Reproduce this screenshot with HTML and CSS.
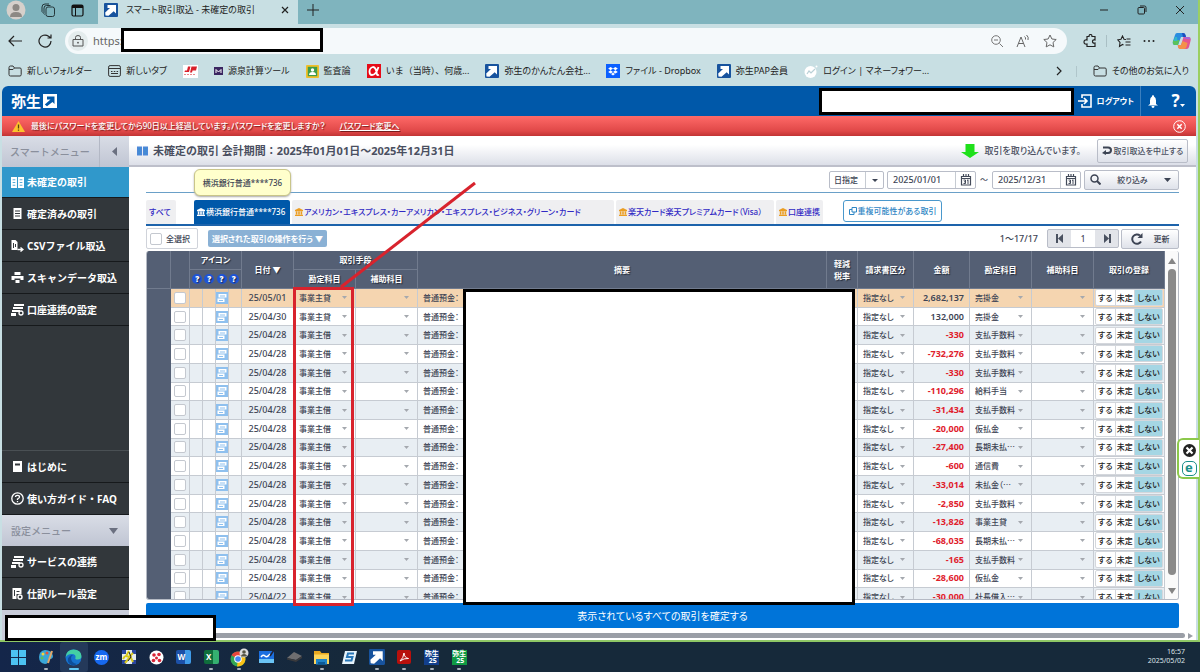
FILE: index.html
```html
<!DOCTYPE html>
<html lang="ja">
<head>
  <meta charset="UTF-8" />
  <meta name="viewport" content="width=device-width, initial-scale=1" />
  <title>スマート取引取込 - 未確定の取引</title>
  <link rel="stylesheet" href="styles.css">
</head>
<body>

  <svg class="sprite" aria-hidden="true">
    <symbol id="yayoi" viewBox="0 0 14 14"><rect width="14" height="14" rx="1" fill="#17539e"/><path d="M3.500 2H12v8.500L9.700 8.200 4.500 12.800 1.500 12.500 1.200 9.500 6 5H3.500z" fill="#fff"/></symbol>
    <symbol id="folder" viewBox="0 0 14 12"><path d="M1 9.500V2.500Q1 1 2.500 1H5l1.500 2H12q1.200 0 1.200 1.200V9.500Q13.200 11 12 11H2.500Q1 11 1 9.500zM1 4.500h4l1.500-1.500" fill="none" stroke="#333" stroke-width="1"/></symbol>
    <symbol id="bank" viewBox="0 0 10 10"><path d="M5 0l5 2.500V4H0V2.500zM1 4.500h2V8H1zM4 4.500h2V8H4zM7 4.500h2V8H7zM0 8.500h10V10H0z" fill="currentColor"/></symbol>
    <symbol id="book" viewBox="0 0 12 10"><path d="M0 0h5.500v10H0zM6.500 0H12v10H6.500z" fill="currentColor"/><path d="M1.500 2.500h2.500M1.500 5h2.500M1.500 7.500h2.500M8 2.500h2.500M8 5h2.500M8 7.500h2.500" stroke="#3098cb" opacity=".8"/></symbol>
    <symbol id="cal" viewBox="0 0 12 12"><path d="M1.500 2.500h9v8.500h-9zM1.500 4.500h9M3.500 0v3M6 0v3M8.500 0v3" fill="none" stroke="#444b5a" stroke-width="1.200"/><path d="M3.500 6h2v3.500H3.500M4 7.800h1.500M8 5.500V10M7 6.300h1" fill="none" stroke="#444b5a"/></symbol>
    <symbol id="link" viewBox="0 0 13 12"><path d="M3 0h10v2H3zM2 3h10v2H2zM1 6h8v2H1zM0 9h5v3H0z" fill="currentColor"/><circle cx="10" cy="9" r="2" fill="none" stroke="currentColor" stroke-width="1.300"/></symbol>
  </svg>

  <div class="window">
    <div class="title-bar">
      <div class="title-icons">
        <svg width="20" height="20" viewBox="0 0 20 20"><circle cx="10" cy="10" r="9.500" fill="#d6d0cb"/><circle cx="10" cy="7.500" r="3.500" fill="#8d8984"/><path d="M4 17q0-5 6-5t6 5z" fill="#8d8984"/></svg>
        <svg width="15" height="15" viewBox="0 0 15 15" fill="none" stroke="#24363a"><rect x="5" y="4" width="8.500" height="9.500" rx="2"/><path d="M3.500 11.500Q2.500 11 3 9V5q0-2.500 2.500-2.500h4M1.500 9.500Q.8 9 1 7V4Q1 1 4 1h4"/></svg>
        <svg width="13" height="13" viewBox="0 0 13 13"><rect x="1" y="1" width="11" height="11" rx="1.500" fill="none" stroke="#111" stroke-width="1.200"/><path d="M1 1h11v3H1z" fill="#111"/><path d="M4.500 4v8" stroke="#111"/></svg>
      </div>
      <div class="browser-tab">
        <svg width="14" height="14"><use href="#yayoi"/></svg>
        <span>スマート取引取込 - 未確定の取引</span>
        <button class="plain" aria-label="タブを閉じる"><svg width="8" height="8" viewBox="0 0 8 8"><path d="M1 1l6 6M7 1L1 7" stroke="#222" stroke-width="1.200"/></svg></button>
      </div>
      <button class="plain new-tab" aria-label="新しいタブ"><svg width="12" height="12" viewBox="0 0 12 12"><path d="M6 0v12M0 6h12" stroke="#222"/></svg></button>
      <div class="window-buttons">
        <button class="plain" aria-label="最小化"><svg width="10" height="10" viewBox="0 0 10 10"><path d="M1 5h8" stroke="#222"/></svg></button>
        <button class="plain" aria-label="元に戻す"><svg width="10" height="10" viewBox="0 0 10 10" fill="none" stroke="#222"><rect x="1" y="2.500" width="6.500" height="6.500" rx="1"/><path d="M3 1h4.500Q9 1 9 2.500V7"/></svg></button>
        <button class="plain" aria-label="閉じる"><svg width="10" height="10" viewBox="0 0 10 10"><path d="M1 1l8 8M9 1L1 9" stroke="#222"/></svg></button>
      </div>
    </div>

    <div class="address-row">
      <button class="plain" aria-label="戻る"><svg width="14" height="12" viewBox="0 0 14 12"><path d="M6 1L1 6l5 5M1 6h13" fill="none" stroke="#222" stroke-width="1.200"/></svg></button>
      <button class="plain reload" aria-label="更新"><svg width="14" height="14" viewBox="0 0 14 14"><path d="M13 7A6 6 0 1 1 10.500 2.200L13 4M13 .5V4H9.500" fill="none" stroke="#222" stroke-width="1.200"/></svg></button>
      <div class="address">
        <svg class="lock" width="20" height="20" viewBox="0 0 20 20"><circle cx="10" cy="10" r="10" fill="#e4eced"/><path d="M5 8.500h10V15H5zM7.500 8.500V6.500Q7.500 4.500 10 4.500t2.500 2v2" fill="none" stroke="#555"/><circle cx="10" cy="11.700" r=".9" fill="#555"/></svg>
        <input type="text" value="https:" aria-label="アドレス">
        <svg width="12" height="12" viewBox="0 0 12 12"><path d="M8.500 8.500L12 12M3 5h4" stroke="#777"/><circle cx="5" cy="5" r="4.300" fill="none" stroke="#777"/></svg>
        <svg width="14" height="13" viewBox="0 0 14 13"><path d="M1 12L5 2l4 10M2.500 8.500h5M8.500 1.500q1.500 1 1 3M10.500 0q2.500 2 1.500 5" fill="none" stroke="#666"/></svg>
        <svg width="14" height="14" viewBox="0 0 14 14"><path d="M7 1l1.900 4 4.300.5L10 8.500l.8 4.400L7 10.800l-3.800 2.100L4 8.500.8 5.500 5.100 5z" fill="none" stroke="#666"/></svg>
      </div>
      <div class="address-tools">
        <svg width="13" height="14" viewBox="0 0 13 14"><path d="M4 2.500h2q0-2 1.500-2t1.500 2h3v3.500q-2.500-.5-2.500 1.500t2.500 1.500v3.500H4V10Q1 10.500 1 8t3-2z" fill="none" stroke="#222" stroke-width="1.200"/></svg>
        <i></i>
        <svg width="14" height="13" viewBox="0 0 14 13"><path d="M9 4.500l-2-.3L5.500 1 4 4.200.8 4.800 3 7.500l-.5 4L5.500 9.500l1 .5M9.500 4h4M8.500 7h5M8.500 10h5" fill="none" stroke="#222" stroke-width="1.100"/></svg>
        <svg width="12" height="4" viewBox="0 0 12 4" fill="#222"><circle cx="1.500" cy="2" r="1"/><circle cx="6" cy="2" r="1"/><circle cx="10.500" cy="2" r="1"/></svg>
        <svg width="19" height="18" viewBox="0 0 19 18"><path d="M5 1h6q2 0 2.500 2l.5 2H9L6 13H3Q0 13 1 9l2-6q.5-2 2-2z" fill="#2a8de0"/><path d="M1 9q-.8 4 2 4h3l1.500-5H1.300z" fill="#5cc25a"/><path d="M5 5H3L1.500 9h4z" fill="#35b8c8"/><path d="M14 5h2.500q3 0 2 4l-1.500 6q-.5 2-2.500 2H8.500q-2 0-2.500-2l-.3-2H9l2.500-8z" fill="#e4558f"/><path d="M6 13h3l1.500-4 5 2-1 4q-.5 2-2.500 2H8.500Q6.500 17 6 15z" fill="#f4914a"/><path d="M11 1q2 0 2.500 2l.5 2h-3L10 1z" fill="#1c4fc0"/><path d="M14 5h2.500q2 0 2 2.500L11 6.500z" fill="#a866d8"/></svg>
      </div>
    </div>

    <nav class="bookmarks">
      <a href="#"><svg width="14" height="12"><use href="#folder"/></svg>新しいフォルダー</a>
      <a href="#"><svg width="13" height="12" viewBox="0 0 13 12"><rect x=".6" y=".6" width="11.800" height="10.800" rx="1.500" fill="none" stroke="#333"/><path d="M1 3.500h11M3 6.500h1.500M5.800 6.500h1.500M8.600 6.500h1.500M3 8.500h7" stroke="#333"/></svg>新しいタブ</a>
      <a href="#" aria-label="日本郵便"><svg width="15" height="13" viewBox="0 0 15 13"><rect width="15" height="13" fill="#fff"/><path d="M5 1.500h2.500L6 7H1.500L2 5.500h2zM8.500 1.500H14L13 5.500H9.500L9 7.500H7z" fill="#d8202a"/><path d="M1 9.500h12" stroke="#e8888c" stroke-width="1.200" stroke-dasharray="2 1"/></svg></a>
      <a href="#"><svg width="9" height="8" viewBox="0 0 9 8"><rect width="9" height="8" fill="#3a2560"/><path d="M2 6V2.500L4.500 5 7 2.500V6" fill="none" stroke="#fff"/></svg>源泉計算ツール</a>
      <a href="#"><svg width="13" height="13" viewBox="0 0 13 13"><rect width="13" height="13" rx="1" fill="#efbf2a"/><rect x="1.800" y="1.800" width="9.400" height="9.400" fill="#3f9b4a"/><circle cx="6.500" cy="5" r="1.700" fill="#fff"/><path d="M3 10q0-3 3.500-3t3.500 3z" fill="#fff"/></svg>監査論</a>
      <a href="#" class="wide"><svg width="14" height="14" viewBox="0 0 14 14"><rect width="14" height="14" fill="#e60b18"/><path d="M11.500 3Q9 11 5 11 2.500 11 2.500 7.500T6 3q3 0 4 7.500.5 1 2 .3" fill="none" stroke="#fff" stroke-width="1.800"/></svg>いま（当時）、何歳...</a>
      <a href="#"><svg width="14" height="14"><use href="#yayoi"/></svg>弥生のかんたん会社...</a>
      <a href="#"><svg width="14" height="14" viewBox="0 0 14 14"><rect width="14" height="14" fill="#0b5fff"/><path d="M4.600 3L7 4.600 4.600 6.200 2.200 4.600zM9.400 3l2.400 1.600-2.400 1.600L7 4.600zM4.600 6.300L7 7.900 4.600 9.500 2.200 7.900zM9.400 6.300l2.400 1.600-2.400 1.600L7 7.900zM7 8.700l2 1.400-2 1.400-2-1.400z" fill="#fff"/></svg>ファイル - Dropbox</a>
      <a href="#"><svg width="14" height="14"><use href="#yayoi"/></svg>弥生PAP会員</a>
      <a href="#"><svg width="14" height="13" viewBox="0 0 14 13"><circle cx="6.500" cy="7" r="6" fill="#fff"/><circle cx="12.500" cy="1.500" r="1" fill="#fff"/><path d="M3 9l2-3 2 2 4-4" fill="none" stroke="#b9d0d6" stroke-width="1.200"/></svg>ログイン | マネーフォワー...</a>
      <span class="bookmark-more"><svg width="6" height="10" viewBox="0 0 6 10"><path d="M1 1l4 4-4 4" fill="none" stroke="#222" stroke-width="1.200"/></svg></span>
      <a href="#"><svg width="14" height="12"><use href="#folder"/></svg>その他のお気に入り</a>
    </nav>

    <div class="page">
      <header class="app-header">
        <div class="logo">弥生<svg width="14" height="14" viewBox="0 0 14 14"><path d="M0 0h14v14H0z" fill="#fff"/><path d="M4 2.500h7.500V10L9.500 8 4 12.300 1.800 10.500 7.500 5.500H4z" fill="#0058a9"/></svg></div>
        <a href="#" class="logout"><svg width="14" height="14" viewBox="0 0 14 14"><path d="M4 4V1h9v12H4v-3M0 7h8M6 4l3 3-3 3" fill="none" stroke="#fff" stroke-width="1.600"/></svg>ログアウト</a>
        <button class="plain bell" aria-label="お知らせ"><svg width="10" height="13" viewBox="0 0 10 13"><path d="M5 0q1 0 1 1.500 2 1 2 4V9l2 1.500H0L2 9V5.500q0-3 2-4Q4 0 5 0zM3.500 11h3q0 2-1.500 2t-1.500-2z" fill="#fff"/></svg></button>
        <button class="plain help" aria-label="ヘルプ">?<svg width="5" height="3" viewBox="0 0 5 3"><path d="M0 0h5L2.500 3z" fill="#fff"/></svg></button>
      </header>

      <div class="alert">
        <svg width="13" height="11" viewBox="0 0 13 11"><path d="M6.500 0L13 11H0z" fill="#fdc22d"/><path d="M6.500 3.500v4M6.500 8.500v1.200" stroke="#5a4510" stroke-width="1.300"/></svg>
        <span>最後にパスワードを変更してから90日以上経過しています。パスワードを変更しますか？</span>
        <a href="#">パスワード変更へ</a>
        <button class="plain" aria-label="閉じる"><svg width="13" height="13" viewBox="0 0 13 13" fill="none" stroke="#fff"><circle cx="6.500" cy="6.500" r="5.800"/><path d="M4.300 4.300l4.400 4.400M8.700 4.300L4.300 8.700" stroke-width="1.500"/></svg></button>
      </div>

      <div class="columns">
        <aside class="sidebar">
          <div class="menu-head">スマートメニュー<button class="plain" aria-label="メニューを閉じる"><svg width="5" height="9" viewBox="0 0 5 9"><path d="M5 0v9L0 4.500z" fill="#6b7080"/></svg></button></div>
          <a href="#" class="current"><svg width="12" height="11"><use href="#book"/></svg>未確定の取引</a>
          <a href="#"><svg width="12" height="11" viewBox="0 0 12 11"><path d="M2 0h8v11H2z" fill="#fff"/><path d="M3.500 3h5M3.500 5.500h5M3.500 8h5" stroke="#32373b"/></svg>確定済みの取引</a>
          <a href="#"><svg width="12" height="12" viewBox="0 0 12 12"><path d="M0 0h4l2 2v8H0z" fill="#fff"/><path d="M2 3v5M4 4v3" stroke="#32373b"/><path d="M6 9.500h5M9 7.500l2.500 2-2.500 2" fill="none" stroke="#fff" stroke-width="1.400"/></svg>CSVファイル取込</a>
          <a href="#"><svg width="12" height="11" viewBox="0 0 12 11"><path d="M3 0h6v3H3zM0 4h12v4H9V6.500H3V8H0zM4 8h4v3H4z" fill="#fff"/></svg>スキャンデータ取込</a>
          <a href="#"><svg width="13" height="12"><use href="#link"/></svg>口座連携の設定</a>
          <div class="spacer"></div>
          <a href="#"><svg width="12" height="11" viewBox="0 0 12 11"><path d="M1.500 0h9v11h-9z" fill="#fff"/><path d="M3.500 2.500h5v2h-5z" fill="#32373b"/></svg>はじめに</a>
          <a href="#"><svg width="13" height="13" viewBox="0 0 13 13" fill="none" stroke="#fff"><circle cx="6.500" cy="6.500" r="5.700" stroke-width="1.300"/><path d="M4.500 5Q4.500 3.300 6.500 3.300T8.500 5Q8.500 6 6.500 7v1M6.500 9v1.200" stroke-width="1.300"/></svg>使い方ガイド・FAQ</a>
          <div class="menu-head settings">設定メニュー<svg width="9" height="6" viewBox="0 0 9 6"><path d="M0 0h9L4.500 6z" fill="#6b7080"/></svg></div>
          <a href="#"><svg width="13" height="12"><use href="#link"/></svg>サービスの連携</a>
          <a href="#"><svg width="12" height="12" viewBox="0 0 12 12"><path d="M1 0h9v6H5v5H1z" fill="#fff"/><path d="M3 2v6M5 3.500h3" stroke="#32373b"/><circle cx="8.500" cy="9" r="2" fill="none" stroke="#fff" stroke-width="1.400"/></svg>仕訳ルール設定</a>
          <div class="menu-foot"></div>
        </aside>

        <main>
          <div class="page-head">
            <svg width="11" height="10"><use href="#book"/></svg>
            <h1>未確定の取引 会計期間：2025年01月01日～2025年12月31日</h1>
            <svg class="arrow-down" width="18" height="14" viewBox="0 0 18 14"><path d="M4.500 0h9v8H18l-9 6-9-6h4.500z" fill="#1fe01a"/></svg>
            <span>取引を取り込んでいます。</span>
            <button class="btn stop"><svg width="10" height="9" viewBox="0 0 10 9"><path d="M1 1.500h5q3 0 3 2.700T6 7H3" fill="none" stroke="#3d4454" stroke-width="2"/><path d="M4 4v5L0 7z" fill="#3d4454"/></svg>取引取込を中止する</button>
          </div>

          <div class="content">
            <div class="filters">
              <select aria-label="期間" class="period"><option>日指定</option></select>
              <div class="date-box"><input type="text" value="2025/01/01" aria-label="開始日"><button class="plain" aria-label="カレンダー"><svg width="12" height="12"><use href="#cal"/></svg></button></div>
              <span>～</span>
              <div class="date-box"><input type="text" value="2025/12/31" aria-label="終了日"><button class="plain" aria-label="カレンダー"><svg width="12" height="12"><use href="#cal"/></svg></button></div>
              <button class="btn narrow"><svg width="11" height="11" viewBox="0 0 11 11" fill="none" stroke="#3d4454"><circle cx="4.500" cy="4.500" r="3.500" stroke-width="1.500"/><path d="M7 7l3.500 3.500" stroke-width="2"/></svg>絞り込み<svg width="7" height="4" viewBox="0 0 7 4"><path d="M0 0h7L3.500 4z" fill="#3d4454"/></svg></button>
              <div class="tip">横浜銀行普通****736</div>
            </div>

            <div class="tabs">
              <a href="#" class="all">すべて</a>
              <a href="#" class="active"><svg width="8" height="8"><use href="#bank"/></svg>横浜銀行普通****736</a>
              <a href="#" class="card"><svg width="8" height="8"><use href="#bank"/></svg>アメリカン・エキスプレス・カーアメリカン・エキスプレス・ビジネス・グリーン・カード</a>
              <a href="#" class="visa"><svg width="8" height="8"><use href="#bank"/></svg>楽天カード楽天プレミアムカード（Visa）</a>
              <a href="#" class="account"><svg width="8" height="8"><use href="#bank"/></svg>口座連携</a>
              <button class="duplicate"><svg width="8" height="8" viewBox="0 0 8 8" fill="none" stroke="#2f86c4"><path d="M3 .5h4.500V5H3zM3 2.500H.5v5h4.500V5"/></svg>重複可能性がある取引</button>
            </div>

            <div class="tools">
              <label class="select-all"><input type="checkbox">全選択</label>
              <button class="bulk">選択された取引の操作を行う ▼</button>
              <span class="count">1～17/17</span>
              <div class="pager">
                <button class="plain" aria-label="前へ"><svg width="8" height="9" viewBox="0 0 8 9"><path d="M0 0h2v9H0zM7 0v9L2 4.500z" fill="#4a5160"/></svg></button>
                <input type="text" value="1" aria-label="ページ">
                <button class="plain" aria-label="次へ"><svg width="8" height="9" viewBox="0 0 8 9"><path d="M6 0h2v9H6zM1 0v9l5-4.500z" fill="#4a5160"/></svg></button>
              </div>
              <button class="btn refresh"><svg width="12" height="12" viewBox="0 0 12 12"><path d="M10 8.500A4.700 4.700 0 1 1 9 2.500" fill="none" stroke="#3d4454" stroke-width="2"/><path d="M11.500 0v5h-5z" fill="#3d4454"/></svg>更新</button>
            </div>

            <div class="grid">
              <div class="grid-view">
                <table>
                  <colgroup>
                    <col class="c-edge"><col class="c-check"><col class="c-icon"><col class="c-icon"><col class="c-icon"><col class="c-icon">
                    <col class="c-date"><col class="c-sel"><col class="c-sel"><col><col class="c-tax"><col class="c-kind">
                    <col class="c-kind"><col class="c-sel"><col class="c-sel"><col class="c-reg">
                  </colgroup>
                  <thead>
                    <tr>
                      <th rowspan="2"></th><th rowspan="2"></th><th colspan="4">アイコン</th><th rowspan="2">日付 ▼</th><th colspan="2">取引手段</th>
                      <th rowspan="2">摘要</th><th rowspan="2">軽減<br>税率</th><th rowspan="2">請求書区分</th><th rowspan="2">金額</th>
                      <th rowspan="2">勘定科目</th><th rowspan="2">補助科目</th><th rowspan="2">取引の登録</th>
                    </tr>
                    <tr>
                      <th colspan="4"><div class="hints"><b>?</b><b>?</b><b>?</b><b>?</b></div></th><th>勘定科目</th><th>補助科目</th>
                    </tr>
                  </thead>
                  <tbody id="rows"></tbody>
                </table>
              </div>
              <div class="v-scroll"><i class="up"></i><i class="thumb"></i><i class="down"></i></div>
            </div>

            <button class="confirm">表示されているすべての取引を確定する</button>
          </div>
          <div class="h-scroll"><i class="thumb"></i><i class="right"></i></div>
        </main>
      </div>
    </div>

    <!-- 目隠しと注釈 -->
    <div class="mask mask-url"></div>
    <div class="mask mask-user"></div>
    <div class="mask mask-summary"></div>
    <div class="mask mask-status"></div>
    <svg class="note" width="186" height="428" viewBox="0 0 186 428" fill="none" stroke="#d8232d"><rect x="3.500" y="107.500" width="58" height="316" stroke-width="3"/><path d="M50 106L184 2" stroke-width="3"/></svg>

    <div class="side-widget">
      <svg width="13" height="13" viewBox="0 0 13 13"><circle cx="6.500" cy="6.500" r="6.500" fill="#222"/><path d="M3.500 3.500l6 6M9.500 3.500l-6 6" stroke="#fff" stroke-width="2.200"/></svg>
      <span>e</span>
    </div>
  </div>

  <footer class="taskbar">
    <div class="apps">
      <div><svg width="15" height="15" viewBox="0 0 15 15" fill="#4cc2f1"><path d="M0 0h7v7H0zM8 0h7v7H8zM0 8h7v7H0zM8 8h7v7H8z"/></svg></div>
      <div class="run"><svg width="16" height="16" viewBox="0 0 16 16"><path d="M7 1q7 0 8 6 0 3-3 3-2 0-2 2 0 3-3 3Q1 14 1 8q0-6 6-7z" fill="#3aa6d8"/><circle cx="5" cy="5" r="1.500" fill="#f4d23c"/><circle cx="9" cy="4" r="1.500" fill="#e8503c"/><circle cx="4" cy="9" r="1.500" fill="#58c060"/><path d="M14 2l-4 12" stroke="#e3a868" stroke-width="2"/></svg></div>
      <div class="run active"><svg width="17" height="17" viewBox="0 0 17 17"><circle cx="8.500" cy="8.500" r="8" fill="#1773cf"/><path d="M.8 7Q2 .5 8.500.5q7.500 0 8 6.500 0 3.500-4 3.500-3 0-2-2Q11 5 7 5 2.500 5 .8 8z" fill="#43cfa4"/><path d="M6 9q0 5 6 6-2 1.500-5 1.300Q2 14 3 9.500 5 5.500 8 6 6 7 6 9z" fill="#0d4f9c"/></svg></div>
      <div><span class="app zoom">zm</span></div>
      <div><svg width="14" height="14" viewBox="0 0 14 14"><path d="M0 0h14v14H0z" fill="#e6edf0"/><path d="M0 0h4v4H0zM10 0h4v4h-4zM0 10h4v4H0zM10 10h4v4h-4z" fill="#2945a0"/><path d="M7 1L4 6l4 1-5 6M11 3L8 6l3 6M3 6l-2 3" stroke="#d9c91c" stroke-width="2" fill="none"/><path d="M7 2l2 5-3 4" stroke="#222" fill="none"/></svg></div>
      <div><svg width="15" height="15" viewBox="0 0 15 15"><circle cx="7.500" cy="7.500" r="7" fill="#fff"/><g fill="#d92638"><circle cx="5" cy="5" r="1.800"/><circle cx="10" cy="4.500" r="1.800"/><circle cx="7.500" cy="8" r="1.500"/><circle cx="4.500" cy="10.500" r="1.800"/><circle cx="10.500" cy="10.500" r="1.800"/></g></svg></div>
      <div><span class="app word">W</span></div>
      <div class="run"><span class="app excel">X</span></div>
      <div class="run"><svg width="19" height="19" viewBox="0 0 19 19"><circle cx="8" cy="11" r="7.500" fill="#33a653"/><path d="M8 11L1.500 7.200Q4 3.500 8 3.500q5 0 7 4.500H8z" fill="#e8453c"/><path d="M8 11l7-3q1.500 6-2.500 9Q10 18.700 7 18.400z" fill="#fbc116"/><circle cx="8" cy="11" r="3.800" fill="#fff"/><circle cx="8" cy="11" r="2.800" fill="#4285f4"/><circle cx="14" cy="5" r="4.500" fill="#ddd"/><circle cx="14" cy="4" r="1.800" fill="#554"/><path d="M11 8.500q0-2.500 3-2.500t3 2.500z" fill="#554"/></svg></div>
      <div><svg width="16" height="14" viewBox="0 0 16 14"><path d="M0 1h15v12H0z" fill="#1b6fe0"/><path d="M0 9h15v4H0z" fill="#6bc4f5"/><path d="M2 7q2-3 4-1t5-2" stroke="#fff" stroke-width="1.500" fill="none"/><path d="M15 0l-4 6" stroke="#223" stroke-width="1.500"/></svg></div>
      <div><svg width="15" height="12" viewBox="0 0 15 12"><path d="M7 1l8 4-6 4-9-2z" fill="#6e6e70"/><path d="M0 7l9 2v2L0 8.500zM9 9l6-4v2l-6 4z" fill="#3a3a3c"/></svg></div>
      <div class="run"><svg width="17" height="15" viewBox="0 0 17 15"><path d="M1 1h6l1.500 2H16v11H1z" fill="#e8a820"/><path d="M1 4.500h15V14H1z" fill="#fcd55c"/><path d="M3 9h11v5.500H3z" fill="#1f84c8"/><path d="M5 12h7v2.500H5z" fill="#0c5a98"/></svg></div>
      <div><svg width="15" height="13" viewBox="0 0 15 13"><path d="M3 0h12l-3 13H0z" fill="#e6f3fb"/><path d="M12 2.500H6L5 6h5.500L9.500 9.500H3" fill="none" stroke="#2877b8" stroke-width="2"/></svg></div>
      <div class="run"><svg width="16" height="16"><use href="#yayoi"/></svg></div>
      <div class="run"><svg width="14" height="14" viewBox="0 0 14 14"><rect width="14" height="14" rx="2" fill="#b8100c"/><path d="M3 11q3.500-3 4-8 .5 5 4.500 5.500Q7 8 3 11z" fill="none" stroke="#fff"/></svg></div>
      <div class="run"><span class="app yayoi blue">弥生<br>&nbsp;25</span></div>
      <div class="run"><span class="app yayoi green">弥生<br>&nbsp;25</span></div>
    </div>
    <div class="clock">16:57<br>2025/05/02</div>
  </footer>

  <script src="script.js"></script>
</body>
</html>
```
FILE: styles.css
```css
:root {
  --navy: #0058a9;
  --chrome: #c8dfe3;
  --head: #545f74;
  --dark: #32373b;
  --line: #c6cbd2;
  --text: #3d4454;
}

* {
  box-sizing: border-box;
}

body {
  margin: 0;
  height: 100vh;
  display: flex;
  flex-direction: column;
  overflow: hidden;
  font-family: "Noto Sans", "Noto Sans CJK JP", sans-serif;
  font-feature-settings: "palt";
  font-size: 8px;
  line-height: 12px;
  color: var(--text);
  background: #16283a;
}

button, input, select {
  font: inherit;
  font-feature-settings: inherit;
  color: inherit;
  margin: 0;
}

svg {
  flex: none;
}

a {
  color: inherit;
  text-decoration: none;
}

.sprite {
  position: absolute;
  width: 0;
  height: 0;
}

.plain {
  display: flex;
  align-items: center;
  justify-content: center;
  padding: 0;
  border: none;
  background: none;
}

/* browser */
.window {
  position: relative;
  flex: 1;
  min-height: 0;
  display: flex;
  flex-direction: column;
  background: var(--chrome);
  border-right: 2px solid #9bcf62;
  border-bottom: 2px solid #8fc866;
}

.title-bar {
  display: flex;
  height: 24px;
  background: #7fb4be;
}

.title-icons {
  display: flex;
  align-items: center;
  gap: 15px;
  width: 98px;
  padding: 0 0 4px 6px;
}

.browser-tab {
  display: flex;
  align-items: center;
  width: 200px;
  padding: 0 9px 4px 6px;
  gap: 8px;
  background: var(--chrome);
  font-size: 9px;
  color: #222;
}

.browser-tab span {
  flex: 1;
  white-space: nowrap;
}

.new-tab {
  width: 30px;
  padding-bottom: 4px;
}

.window-buttons {
  display: flex;
  gap: 28px;
  margin-left: auto;
  padding: 0 13px 4px 0;
}

.address-row {
  display: flex;
  align-items: center;
  height: 34px;
  padding: 0 7px 0 8px;
}

.reload {
  margin: 0 13px 0 16px;
}

.address {
  flex: 1;
  display: flex;
  align-items: center;
  gap: 13px;
  height: 26px;
  padding: 0 10px 0 3px;
  border-radius: 13px;
  background: #f5f9fb;
}

.address input {
  flex: 1;
  min-width: 0;
  margin-left: -8px;
  padding: 0;
  border: none;
  outline: none;
  background: none;
  font-size: 11px;
  color: #666;
}

.address-tools {
  display: flex;
  align-items: center;
  gap: 12px;
  margin-left: 16px;
}

.address-tools i {
  width: 1px;
  height: 12px;
  margin: 0 -2px;
  background: #a9bfc4;
}

.address-tools svg:last-child {
  margin-left: 5px;
}

.bookmarks {
  display: flex;
  align-items: center;
  height: 28px;
  padding: 0 9px 2px 8px;
  gap: 16px;
  font-size: 9px;
  color: #222;
  white-space: nowrap;
}

.bookmarks a {
  display: flex;
  align-items: center;
  gap: 5px;
}

.bookmarks .wide {
  font-feature-settings: normal;
}

.bookmark-more {
  margin-left: auto;
  padding-right: 14px;
  line-height: 8px;
  border-right: 1px solid #b0c6cb;
}

/* page */
.page {
  flex: 1;
  min-height: 0;
  display: flex;
  flex-direction: column;
  margin: 0 2px;
  border-radius: 6px 6px 0 0;
  overflow: hidden;
  background: #fff;
}

.app-header {
  display: flex;
  align-items: center;
  height: 30px;
  padding: 0 5px 0 9px;
  background: var(--navy);
  color: #fff;
}

.logo {
  flex: 1;
  display: flex;
  align-items: center;
  gap: 2px;
  font-size: 15px;
  font-weight: bold;
}

.logout {
  display: flex;
  align-items: center;
  gap: 5px;
  height: 30px;
  padding-right: 6px;
  border-right: 1px solid #3c7fbe;
  font-weight: bold;
}

.bell {
  width: 24px;
}

.help {
  width: 26px;
  font-size: 17px;
  font-weight: bold;
}

.help svg {
  align-self: flex-end;
}

.alert {
  display: flex;
  align-items: center;
  height: 20px;
  padding: 0 10px;
  gap: 6px;
  background: linear-gradient(#ff6a68, #e04848 75%, #c23434);
  color: #fff;
  font-weight: 500;
  text-shadow: 1px 1px 1px #7a1c1c;
  white-space: nowrap;
}

.alert a {
  margin-left: 8px;
  text-decoration: underline;
}

.alert button {
  margin-left: auto;
}

.columns {
  flex: 1;
  min-height: 0;
  display: flex;
}

.sidebar {
  display: flex;
  flex-direction: column;
  width: 127px;
  background: var(--dark);
  font-size: 10px;
  line-height: 14px;
  font-feature-settings: normal;
  white-space: nowrap;
}

.menu-head {
  display: flex;
  align-items: center;
  justify-content: space-between;
  height: 31px;
  padding-left: 8px;
  background: linear-gradient(#d9dde6, #c0c5d3);
  color: #8a8f9c;
  font-weight: 500;
}

.menu-head button {
  width: 30px;
  height: 31px;
  border-left: 1px solid #b3b8c5;
}

.settings {
  padding: 0 11px 0 9px;
}

.sidebar a {
  display: flex;
  align-items: center;
  gap: 3px;
  height: 32px;
  padding-left: 9px;
  border-bottom: 1px solid #16191b;
  color: #fff;
  font-weight: bold;
}

.sidebar a svg {
  width: 13px;
}

.sidebar .current {
  background: #3098cb;
  height: 31px;
}

.spacer {
  flex: 1;
  border-bottom: 1px solid #4a5054;
}

.menu-foot {
  height: 30px;
  background: #c8ccd9;
}

main {
  flex: 1;
  min-width: 0;
  display: flex;
  flex-direction: column;
}

.page-head {
  display: flex;
  align-items: center;
  height: 31px;
  padding: 0 8px;
  border-bottom: 2px solid #bdbfca;
  background: linear-gradient(#fff, #fff 30%, #dcdfe8);
  font-weight: 500;
  white-space: nowrap;
  color: #4a4f60;
}

.page-head > svg:first-child {
  color: #4d87d8;
}

h1 {
  margin: 0 0 0 5px;
  font-size: 11px;
  font-weight: bold;
  font-feature-settings: normal;
}

.arrow-down {
  margin: 0 5px 0 auto;
}

.page-head span {
  font-size: 9px;
}

.btn {
  display: flex;
  align-items: center;
  justify-content: center;
  gap: 2px;
  padding: 0;
  border: 1px solid #b9bdc8;
  border-radius: 2px;
  background: linear-gradient(#fff, #dfe2ea);
  font-weight: 500;
  white-space: nowrap;
}

.stop {
  width: 91px;
  height: 24px;
  margin-left: 16px;
}

.content {
  flex: 1;
  min-height: 0;
  display: flex;
  flex-direction: column;
  padding: 0 17px 3px;
}

.filters {
  position: relative;
  display: flex;
  align-items: center;
  justify-content: flex-end;
  gap: 3px;
  height: 26px;
  border-bottom: 1px solid #6aa0c8;
  font-weight: 500;
}

.filters span {
  width: 10px;
  text-align: center;
}

select {
  appearance: none;
  border: none;
  border-radius: 0;
  background: url("data:image/svg+xml,%3Csvg xmlns='http://www.w3.org/2000/svg' width='5' height='3'%3E%3Cpath d='M0 0h5L2.5 3z' fill='%23a4a8ae'/%3E%3C/svg%3E") no-repeat right 3px center;
  font-family: "Noto Sans CJK JP", sans-serif;
}

.period {
  width: 55px;
  height: 18px;
  padding: 0 4px;
  border: 1px solid #b9bdc8;
  border-radius: 2px;
  background-image: url("data:image/svg+xml,%3Csvg xmlns='http://www.w3.org/2000/svg' width='18' height='16'%3E%3Cpath d='M.5 0v16' stroke='%23c6cbd2'/%3E%3Cpath d='M7 7h6l-3 3z' fill='%233d4454'/%3E%3C/svg%3E");
  background-position: right center;
}

.date-box {
  display: flex;
  width: 89px;
  height: 18px;
  border: 1px solid #b9bdc8;
  border-radius: 2px;
  font-size: 9px;
}

.date-box input {
  flex: 1;
  min-width: 0;
  padding: 0 5px;
  border: none;
  border-right: 1px solid var(--line);
  background: none;
}

.date-box button {
  width: 19px;
}

.narrow {
  width: 95px;
  height: 20px;
  padding: 0 7px 0 5px;
  justify-content: space-between;
}

.tip {
  position: absolute;
  left: 48px;
  top: 2px;
  width: 97px;
  height: 27px;
  border: 1px solid #c9c58a;
  border-radius: 6px;
  background: #ffffcc;
  box-shadow: 0 1px 2px #aaa;
  line-height: 26px;
  text-align: center;
  white-space: nowrap;
}

.tabs {
  display: flex;
  align-items: flex-end;
  gap: 2px;
  height: 33px;
  border-bottom: 2px solid #1d63ab;
  white-space: nowrap;
  font-weight: 500;
}

.tabs a {
  display: flex;
  align-items: center;
  gap: 1px;
  height: 24px;
  padding-left: 3px;
  border-radius: 2px 2px 0 0;
  background: #efeff1;
  color: #3129c4;
  overflow: hidden;
}

.tabs a svg {
  color: #eb9d22;
}

.tabs .all {
  width: 30px;
  margin-right: 16px;
}

.tabs .active {
  width: 96px;
  background: var(--navy);
  color: #fff;
}

.tabs .active svg {
  color: #fff;
}

.tabs .card {
  width: 322px;
}

.tabs .visa {
  width: 158px;
}

.tabs .account {
  width: 47px;
}

.duplicate {
  display: flex;
  align-items: center;
  justify-content: center;
  gap: 1px;
  width: 99px;
  height: 22px;
  margin: 0 0 2px 18px;
  padding: 0;
  border: 1px solid #4a98cc;
  border-radius: 3px;
  background: #fff;
  color: #2f86c4;
  font-weight: 500;
}

.tools {
  display: flex;
  align-items: center;
  height: 25px;
  font-weight: 500;
}

input[type="checkbox"] {
  appearance: none;
  display: block;
  width: 12px;
  height: 12px;
  border: 1px solid #c4c8cf;
  border-radius: 2px;
  background: #fff;
}

.select-all {
  display: flex;
  align-items: center;
  gap: 4px;
  width: 52px;
  height: 21px;
  padding-left: 3px;
  border: 1px solid #d0d3da;
  border-radius: 2px;
  white-space: nowrap;
}

.bulk {
  width: 119px;
  height: 17px;
  margin-left: 10px;
  padding: 0;
  border: none;
  border-radius: 2px;
  background: #8ab1d5;
  color: #fff;
  font-weight: bold;
  white-space: nowrap;
}

.count {
  margin: 0 9px 0 auto;
  font-size: 9px;
}

.pager {
  display: flex;
  width: 72px;
  height: 19px;
  border: 1px solid #b9bdc8;
  border-radius: 2px;
  background: #e2e4e9;
}

.pager button {
  flex: 1;
}

.pager input {
  width: 24px;
  padding: 0;
  border: none;
  background: #fff;
  text-align: center;
}

.refresh {
  width: 58px;
  height: 20px;
  margin-left: 2px;
  gap: 11px;
}

/* transaction grid */
.grid {
  flex: 1;
  min-height: 0;
  display: flex;
  border: 1px solid #b5bac4;
  border-top: none;
  border-radius: 3px;
  overflow: hidden;
}

.grid-view {
  flex: 1;
  min-width: 0;
  overflow: hidden;
}

table {
  width: 100%;
  height: 356px;
  table-layout: fixed;
  border-collapse: separate;
  border-spacing: 0;
  font-weight: 500;
}

.c-edge { width: 24px; }
.c-check { width: 19px; }
.c-icon { width: 13px; }
.c-date { width: 52px; }
.c-sel { width: 62px; }
.c-tax { width: 31px; }
.c-kind { width: 56px; }
.c-reg { width: 71px; }

th {
  height: 19px;
  padding: 0;
  border-right: 1px solid #717b8e;
  border-bottom: 1px solid #717b8e;
  background: var(--head);
  color: #fff;
  font-weight: bold;
  text-shadow: 1px 1px 1px #222a38;
  white-space: nowrap;
}

.hints {
  display: flex;
  justify-content: space-evenly;
}

.hints b {
  width: 10px;
  height: 10px;
  border-radius: 50%;
  background: #1f54d6;
  line-height: 10px;
}

td {
  padding: 0 5px;
  border-right: 1px solid var(--line);
  border-bottom: 1px solid var(--line);
  overflow: hidden;
  white-space: nowrap;
}

tbody tr:nth-child(odd) {
  background: #e8eef3;
}

tbody tr:first-child {
  background: #f5d5b0;
}

tbody td:first-child {
  border-color: var(--head);
  background: var(--head);
}

td.check {
  padding: 0 3px;
}

td.icon {
  padding: 0;
}

td.icon svg {
  display: block;
}

td.date {
  font-size: 9px;
  text-align: center;
  padding: 0;
}

td select {
  display: block;
  width: 100%;
  height: 16px;
  padding: 0;
}

td.amount {
  font-size: 9px;
  font-weight: 600;
  text-align: right;
}

td.minus {
  color: #e0202c;
  font-weight: bold;
}

td.reg {
  padding: 0 1px;
}

.choice {
  display: flex;
  height: 17px;
  border: 1px solid #d4d7dc;
  border-radius: 2px;
  background: #fff;
  color: #222;
}

.choice button {
  flex: 1;
  padding: 0;
  border: none;
  border-right: 1px solid #d4d7dc;
  background: none;
}

.choice .on {
  flex: none;
  width: 27px;
  border-right: none;
  background: #a5d6e4;
}

.v-scroll {
  display: flex;
  flex-direction: column;
  align-items: center;
  justify-content: space-between;
  gap: 5px;
  width: 13px;
  padding: 7px 0 5px;
  background: #fafafa;
}

.v-scroll .up, .v-scroll .down {
  border: 4px solid transparent;
  border-top: none;
  border-bottom: 6px solid #858585;
}

.v-scroll .down {
  margin-top: 8px;
  border-bottom: none;
  border-top: 6px solid #858585;
}

.v-scroll .thumb {
  flex: 1;
  width: 8px;
  border-radius: 4px;
  background: #8a8a8a;
}

.confirm {
  height: 25px;
  margin-top: 3px;
  border: none;
  border-radius: 2px;
  background: #0074d9;
  color: #fff;
  font-size: 10px;
}

.h-scroll {
  display: flex;
  align-items: center;
  gap: 3px;
  height: 9px;
  padding-right: 3px;
}

.h-scroll .thumb {
  flex: 1;
  height: 5px;
  border-radius: 3px;
  background: #9a9ea6;
}

.h-scroll .right {
  border: 3px solid transparent;
  border-right: none;
  border-left: 5px solid #9a9ea6;
}

/* overlays */
.mask {
  position: absolute;
  border: 3px solid #000;
  background: #fff;
}

.mask-url {
  left: 121px;
  top: 28px;
  width: 202px;
  height: 24px;
}

.mask-user {
  right: 124px;
  top: 88px;
  width: 255px;
  height: 27px;
}

.mask-summary {
  left: 463px;
  top: 289px;
  right: 343px;
  bottom: 35px;
}

.mask-status {
  left: 5px;
  bottom: -1px;
  width: 211px;
  height: 26px;
}

.note {
  position: absolute;
  left: 291px;
  top: 181px;
}

.side-widget {
  position: absolute;
  right: -1px;
  top: 438px;
  display: flex;
  flex-direction: column;
  align-items: center;
  gap: 4px;
  width: 22px;
  height: 41px;
  padding-top: 4px;
  border: 2px solid #8cc84b;
  border-right: none;
  border-radius: 6px 0 0 6px;
  background: #fff;
}

.side-widget span {
  width: 15px;
  height: 15px;
  border: 1px solid #1b8f8a;
  border-radius: 5px;
  color: #1b8f8a;
  font-size: 13px;
  font-weight: bold;
  line-height: 11px;
  text-align: center;
}

/* taskbar */
.taskbar {
  display: flex;
  justify-content: space-between;
  height: 30px;
  padding: 0 15px 0 5px;
  background: linear-gradient(90deg, #14264a, #16293a 30%);
}

.apps {
  display: flex;
  width: 468px;
}

.apps div {
  position: relative;
  flex: 1;
  display: flex;
  align-items: center;
  justify-content: center;
}

.run::after {
  content: "";
  position: absolute;
  bottom: 2px;
  width: 4px;
  height: 2px;
  border-radius: 1px;
  background: #a7b0ba;
}

.apps .active {
  border-radius: 3px;
  background: #24395a;
}

.active::after {
  width: 10px;
  background: #60c8f5;
}

.app {
  width: 15px;
  height: 14px;
  border-radius: 2px;
  color: #fff;
  font-weight: bold;
  line-height: 14px;
  text-align: center;
}

.zoom {
  height: 15px;
  border-radius: 50%;
  background: #1769f0;
}

.word {
  background: linear-gradient(90deg, #1c50a8 60%, #3f9be8 60%);
  text-align: left;
  padding-left: 1px;
}

.excel {
  background: linear-gradient(90deg, #0f6e3c 60%, #35b070 60%);
  text-align: left;
  padding-left: 2px;
}

.yayoi {
  height: 15px;
  border-radius: 0;
  font-size: 7px;
  line-height: 7px;
  white-space: nowrap;
}

.blue { background: #123f8c; }
.green { background: #0f9a44; }

.clock {
  padding-top: 5px;
  font-size: 7px;
  line-height: 9px;
  text-align: right;
  color: #dde3e8;
}
```
FILE: script.js
```js
const rows = [
  ["25/05/01", "事業主貸", "2,682,137", "売掛金"],
  ["25/04/30", "事業主貸", "132,000", "売掛金"],
  ["25/04/28", "事業主借", "-330", "支払手数料"],
  ["25/04/28", "事業主借", "-732,276", "支払手数料"],
  ["25/04/28", "事業主借", "-330", "支払手数料"],
  ["25/04/28", "事業主借", "-110,296", "給料手当"],
  ["25/04/28", "事業主借", "-31,434", "支払手数料"],
  ["25/04/28", "事業主借", "-20,000", "仮払金"],
  ["25/04/28", "事業主借", "-27,400", "長期未払…"],
  ["25/04/28", "事業主借", "-600", "通信費"],
  ["25/04/28", "事業主借", "-33,014", "未払金（…"],
  ["25/04/28", "事業主借", "-2,850", "支払手数料"],
  ["25/04/28", "事業主借", "-13,826", "事業主貸"],
  ["25/04/28", "事業主借", "-68,035", "長期未払…"],
  ["25/04/28", "事業主借", "-165", "支払手数料"],
  ["25/04/28", "事業主借", "-28,600", "仮払金"],
  ["25/04/22", "事業主借", "-30,000", "社長借入…"]
];

const slip = `<svg width="12" height="12" viewBox="0 0 12 12"><path d="M0 0h12v12H0z" fill="#8fc0ee"/><path d="M2.500 2h8v3.500h-8zM1.500 6.500h7v3.500h-7z" fill="#fff"/><path d="M4 4h5M3 8.500h4" stroke="#8fc0ee"/></svg>`;

function dropdown(label, value) {
  return `<select aria-label="${label}"><option>${value}</option></select>`;
}

document.getElementById("rows").innerHTML = rows.map(([date, own, amount, account]) => `
  <tr>
    <td></td>
    <td class="check"><input type="checkbox" aria-label="選択"></td>
    <td class="icon"></td><td class="icon"></td><td class="icon">${slip}</td><td class="icon"></td>
    <td class="date">${date}</td>
    <td>${dropdown("勘定科目", own)}</td>
    <td>${dropdown("補助科目", "")}</td>
    <td>普通預金：</td>
    <td></td>
    <td>${dropdown("請求書区分", "指定なし")}</td>
    <td class="amount ${amount.startsWith("-") ? "minus" : ""}">${amount}</td>
    <td>${dropdown("勘定科目", account)}</td>
    <td>${dropdown("補助科目", "")}</td>
    <td class="reg"><div class="choice"><button>する</button><button>未定</button><button class="on">しない</button></div></td>
  </tr>
`).join("");
```
